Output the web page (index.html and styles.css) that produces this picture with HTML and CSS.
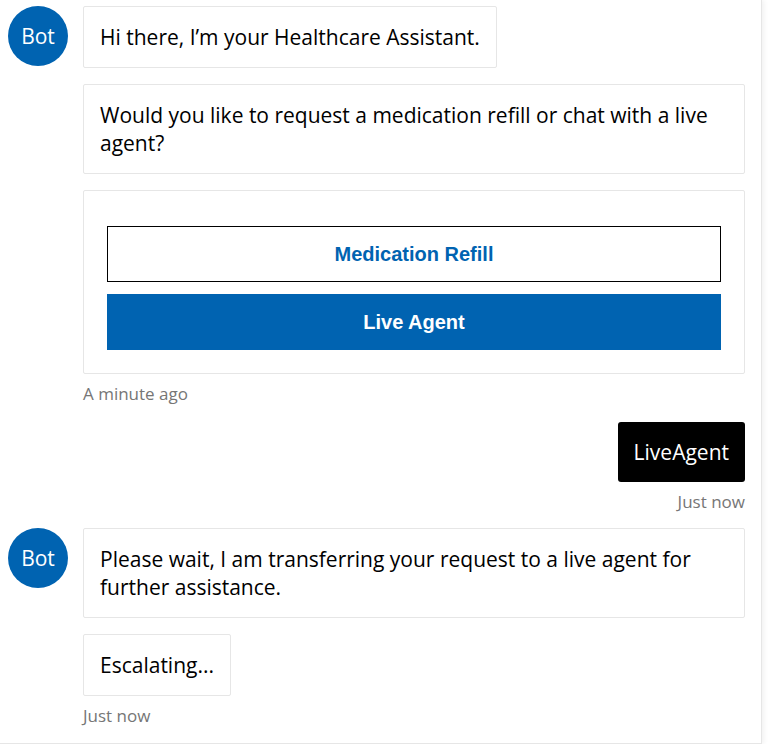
FILE: index.html
```html
<!DOCTYPE html>
<html lang="en">
<head>
<meta charset="utf-8">
<title>Healthcare Assistant</title>
<link rel="stylesheet" href="styles.css">
</head>
<body>
<div class="chat">
  <div class="transcript">
    <div class="group bot">
      <div class="avatar">Bot</div>
      <div class="stack">
        <div class="bubble">Hi there, I’m your Healthcare Assistant.</div>
        <div class="bubble">Would you like to request a medication refill or chat with a live agent?</div>
        <div class="bubble card">
          <button class="action outline">Medication Refill</button>
          <button class="action filled">Live Agent</button>
        </div>
        <div class="time">A minute ago</div>
      </div>
    </div>
    <div class="group user">
      <div class="stack">
        <div class="bubble mine">LiveAgent</div>
        <div class="time">Just now</div>
      </div>
    </div>
    <div class="group bot">
      <div class="avatar">Bot</div>
      <div class="stack">
        <div class="bubble">Please wait, I am transferring your request to a live agent for further assistance.</div>
        <div class="bubble">Escalating...</div>
        <div class="time">Just now</div>
      </div>
    </div>
  </div>
</div>
</body>
</html>
```
FILE: styles.css
```css
html, body {
  margin: 0;
  padding: 0;
  background: #fff;
}
body {
  font-family: "Open Sans", "Noto Sans", sans-serif;
  color: #000;
}
.chat {
  width: 761px;
  height: 743px;
  border-right: 1px solid #e6e6e6;
  border-bottom: 1px solid #e6e6e6;
  box-shadow: 2px 0 5px rgba(0,0,0,0.06);
  overflow: hidden;
}
.transcript {
  padding: 6px 16px 0 8px;
  display: flex;
  flex-direction: column;
  gap: 17px;
}
.group {
  display: flex;
  gap: 15px;
}
.group.user {
  justify-content: flex-end;
  margin-bottom: -2px;
}
.avatar {
  flex: 0 0 60px;
  width: 60px;
  height: 60px;
  border-radius: 50%;
  background: #0063b1;
  color: #fff;
  font-size: 21px;
  display: flex;
  align-items: center;
  justify-content: center;
}
.stack {
  flex: 1;
  min-width: 0;
  display: flex;
  flex-direction: column;
  align-items: flex-start;
  gap: 16px;
}
.group.user .stack {
  align-items: flex-end;
}
.bubble {
  border: 1px solid #e6e6e6;
  border-radius: 2px;
  padding: 16px;
  font-size: 21px;
  line-height: 28px;
  background: #fff;
  max-width: 100%;
  box-sizing: border-box;
}
.stack > .card {
  align-self: stretch;
}
.bubble.mine {
  background: #000;
  color: #fff;
  border: none;
  border-radius: 3px;
}
.card {
  padding: 35px 23px 23px;
  display: flex;
  flex-direction: column;
  gap: 12px;
}
.action {
  height: 56px;
  font-family: "Liberation Sans", Arial, sans-serif;
  font-weight: bold;
  font-size: 20px;
  border-radius: 0;
  cursor: pointer;
}
.action.outline {
  background: #fff;
  color: #0063b1;
  border: 1px solid #000;
}
.action.filled {
  background: #0063b1;
  color: #fff;
  border: 1px solid #0063b1;
}
.time {
  font-size: 17px;
  line-height: 22px;
  color: #767676;
  margin-top: -7px;
}
```
